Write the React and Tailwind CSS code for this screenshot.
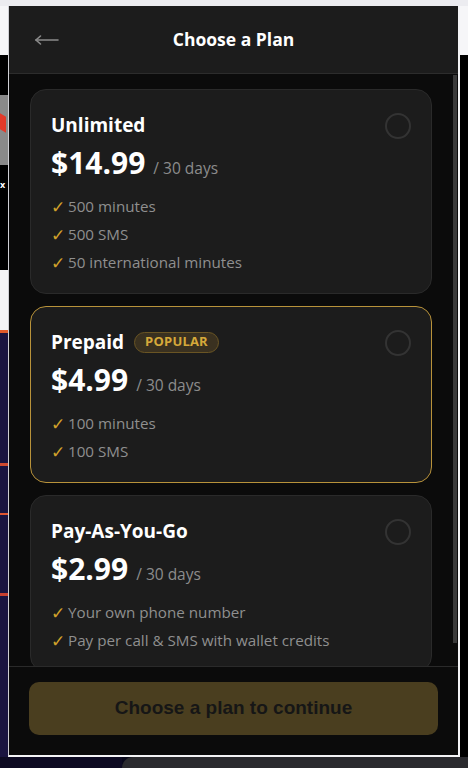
import React from "react";

const PLANS = [
  {
    name: "Unlimited",
    price: "$14.99",
    features: ["500 minutes", "500 SMS", "50 international minutes"],
  },
  {
    name: "Prepaid",
    price: "$4.99",
    popular: true,
    features: ["100 minutes", "100 SMS"],
  },
  {
    name: "Pay-As-You-Go",
    price: "$2.99",
    features: ["Your own phone number", "Pay per call & SMS with wallet credits"],
  },
];

function PlanCard({ plan }) {
  return (
    <div
      className={`rounded-[16px] border px-[20px] pt-[21px] pb-[17px] bg-[#1c1c1c] ${
        plan.popular ? "border-[#b8923a]" : "border-[#2a2a2a]"
      }`}>
      <div className="flex items-start justify-between">
        <div className="flex flex-col">
          {/* Nom + badge */}
          <div className="flex items-center gap-[10px] h-[28px]">
            <span className="text-[19px] font-bold text-white leading-[28px]">
              {plan.name}
            </span>
            {plan.popular && (
              <span className="px-[10px] h-[21px] flex items-center rounded-full border border-[#6a5524] bg-[#3a3120] text-[13px] font-bold tracking-[0.2px] text-[#d6a93a]">
                POPULAR
              </span>
            )}
          </div>

          {/* Prix */}
          <div className="flex items-baseline gap-[8px] mt-[4px] h-[40px]">
            <span className="text-[30px] font-bold text-white leading-[40px]">
              {plan.price}
            </span>
            <span className="text-[15.5px] text-[#8c8c8c]">/ 30 days</span>
          </div>

          {/* Avantages */}
          <ul className="mt-[9px] flex flex-col">
            {plan.features.map((f) => (
              <li
                key={f}
                className="flex items-center gap-[3px] h-[28px] text-[15.2px] leading-[28px] text-[#8f8f8f]">
                <span className="text-[#d1a12a] text-[17px] leading-none">✓</span>
                <span>{f}</span>
              </li>
            ))}
          </ul>
        </div>

        {/* Radio */}
        <div className="mt-[2px] w-[26px] h-[26px] rounded-full border-2 border-[#333333] shrink-0" />
      </div>
    </div>
  );
}

export default function App() {
  return (
    <div
      className="relative w-[468px] h-[768px] overflow-hidden bg-[#08081a] flex flex-col"
      style={{ fontFamily: '"Segoe UI", "Open Sans", "Noto Sans", sans-serif' }}>
      <div className="h-[6px] bg-[#ececf0] shrink-0" />

      <div className="flex flex-1 min-h-0">
        {/* Page derrière — bande gauche */}
        <div className="w-[8px] flex flex-col shrink-0">
          <div className="h-[49px] bg-[#f6f6f8]" />
          <div className="h-[40px] bg-black" />
          <div className="h-[70px] bg-[#8a8a8a] relative">
            <div className="absolute left-0 top-[20px] w-[6px] h-[16px] bg-[#e23a2a] skew-y-[30deg]" />
          </div>
          <div className="h-[105px] bg-black text-white text-[9px] leading-[40px] overflow-hidden">
            <span className="font-bold">x</span>
          </div>
          <div className="h-[60px] bg-[#f4f4f6]" />
          <div className="h-[3px] bg-[#e05a2a]" />
          <div className="flex-1 bg-[#1a1440] relative">
            <div className="absolute left-0 top-[130px] w-[8px] h-[3px] bg-[#d04a30]" />
            <div className="absolute left-0 top-[180px] w-[8px] h-[2px] bg-[#e05530]" />
            <div className="absolute left-0 top-[260px] w-[8px] h-[3px] bg-[#c84030]" />
          </div>
        </div>

        {/* Popup */}
        <div className="w-[452px] shrink-0 flex flex-col border-l border-[#cfcfd4] border-r-2 border-r-[#f4f4f6] border-b-2 border-b-[#f4f4f6] h-[751px]">
          {/* En-tête */}
          <div className="relative h-[68px] shrink-0 flex items-center justify-center bg-[#1c1c1c] border-b border-[#2c2c2c]">
            <svg
              className="absolute left-[25px] top-[28px]"
              width="25"
              height="12"
              viewBox="0 0 25 12"
              fill="none"
              stroke="#8a8a8a"
              strokeWidth="1.6"
              strokeLinecap="round">
              <path d="M2 6h22" />
              <path d="M6.5 2L2 6l4.5 4" />
            </svg>
            <span className="text-[17.5px] font-bold text-white">Choose a Plan</span>
          </div>

          {/* Liste des plans */}
          <div className="flex flex-1 min-h-0 bg-[#0b0b0b]">
            <div className="flex-1 overflow-hidden pl-[21px] pr-[21px] pt-[15px] flex flex-col gap-[12px]">
              {PLANS.map((p) => (
                <PlanCard key={p.name} plan={p} />
              ))}
            </div>
            <div className="w-[5px] shrink-0 pt-[1px]">
              <div className="w-[4px] h-[568px] bg-[#3a3a3a]" />
            </div>
          </div>

          {/* Pied */}
          <div className="shrink-0 border-t border-[#2a2a2a] bg-[#0b0b0b] px-[20px] pt-[15px] pb-[20px]">
            <button
              className="w-full h-[53px] rounded-[10px] bg-[#4a3e1f] text-[19px] font-bold text-[#161616]"
              style={{ fontFamily: '"Liberation Sans", Arial, sans-serif' }}>
              Choose a plan to continue
            </button>
          </div>
        </div>

        {/* Page derrière — bande droite */}
        <div className="flex-1 flex flex-col">
          <div className="h-[49px] bg-[#f6f6f8]" />
          <div className="flex-1 bg-black" />
        </div>
      </div>

      <div className="h-[11px] shrink-0 flex">
        <div className="w-[122px] bg-[#0d0a22]" />
        <div className="flex-1 bg-[#2a2a2e] rounded-tl-[12px]" />
      </div>
    </div>
  );
}
